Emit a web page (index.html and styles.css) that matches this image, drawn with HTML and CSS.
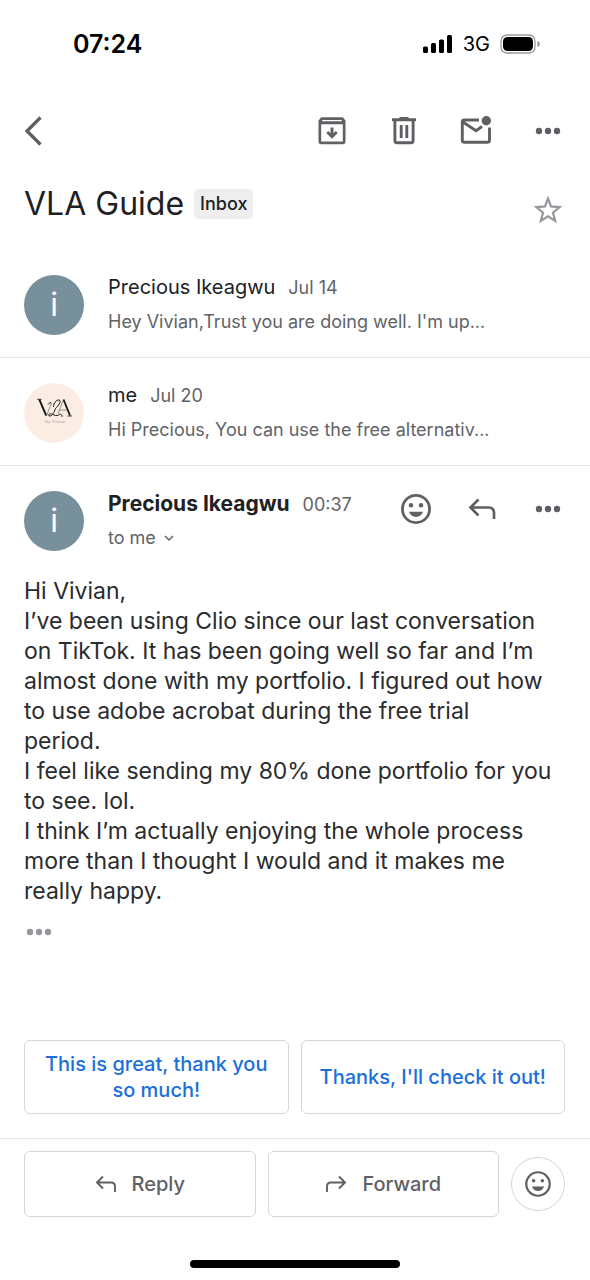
FILE: index.html
```html
<!DOCTYPE html>
<html lang="en">
<head>
<meta charset="utf-8">
<meta name="viewport" content="width=device-width, initial-scale=1">
<title>VLA Guide</title>
<link rel="stylesheet" href="styles.css">
</head>
<body>
<div class="screen">
  <div class="status">
    <time class="clock">07:24</time>
    <div class="indicators">
      <svg width="30" height="18" viewBox="0 0 30 18" aria-hidden="true"><rect x="0" y="11.500" width="5" height="6.500" rx="1.500"/><rect x="8" y="8" width="5" height="10" rx="1.500"/><rect x="16" y="4.500" width="5" height="13.500" rx="1.500"/><rect x="24" y="0" width="5" height="18" rx="1.500"/></svg>
      <span class="network">3G</span>
      <svg width="40" height="20" viewBox="0 0 40 20" aria-hidden="true"><rect x="1" y="1" width="34" height="18" rx="6" fill="none" stroke="#9a9a9a" stroke-width="1.300"/><rect x="3" y="3" width="30" height="14" rx="4.500"/><path d="M37.500 7v6c3-1 3-5 0-6Z" fill="#8e8e8e"/></svg>
    </div>
  </div>

  <nav class="toolbar">
    <button class="icon-button back" aria-label="Back"><svg width="20" height="30" viewBox="0 0 20 30"><path d="M16.500 1.500 3 15l13.500 13.500" fill="none" stroke="currentColor" stroke-width="3.300"/></svg></button>
    <button class="icon-button" aria-label="Archive"><svg width="30" height="30" viewBox="0 0 30 30"><path d="M5 1.300h20q1 0 1.700.9l1.800 2.600V25.500q0 2.700-2.700 2.700H4.200q-2.700 0-2.700-2.700V4.800l1.800-2.600Q4 1.300 5 1.300Z" fill="currentColor"/><path d="M5.700 4h18.600l.9 1.300H4.800ZM4.200 8.200h21.600v17.300H4.200Z" fill="#fff"/><path d="M15 11.500v9M10.300 16l4.700 4.700 4.700-4.700" fill="none" stroke="currentColor" stroke-width="2.900"/></svg></button>
    <button class="icon-button" aria-label="Delete"><svg width="30" height="30" viewBox="0 0 30 30" fill="none" stroke="currentColor" stroke-width="2.900"><path d="M3 3.700h24M10.500 2.500h9"/><path d="M5.900 4v20.800q0 2 2 2h14.200q2 0 2-2V4M12.200 9v13M17.800 9v13"/></svg></button>
    <button class="icon-button" aria-label="Mark as unread"><svg width="32" height="30" viewBox="0 0 32 30" fill="none" stroke="currentColor" stroke-width="2.900"><path d="M19 4H4.300q-2 0-2 2v18.200q0 2 2 2h23.200q2 0 2-2V11.500M2.500 5.800 16 14.800l6-4.300"/><circle cx="26.300" cy="4.800" r="4.700" fill="currentColor" stroke="none"/></svg></button>
    <button class="icon-button" aria-label="More options"><svg width="26" height="8" viewBox="0 0 26 8" fill="currentColor"><circle cx="4" cy="4" r="3.200"/><circle cx="13" cy="4" r="3.200"/><circle cx="22" cy="4" r="3.200"/></svg></button>
  </nav>

  <header class="subject">
    <h1>VLA Guide</h1>
    <span class="label">Inbox</span>
    <button class="icon-button star" aria-label="Star"><svg width="30" height="30" viewBox="0 0 30 30"><path d="m15 3.500 3 7.900 8.600.7-6.600 5.500 2.100 8.300-7.100-4.500-7.100 4.500 2.100-8.300-6.600-5.500 8.600-.7Z" fill="none" stroke="currentColor" stroke-width="2.200"/></svg></button>
  </header>

  <article class="message">
    <div class="avatar">i</div>
    <div class="details">
      <div class="line"><span class="sender">Precious Ikeagwu</span><time>Jul 14</time></div>
      <p class="snippet">Hey Vivian,Trust you are doing well. I'm up...</p>
    </div>
  </article>

  <article class="message">
    <svg class="photo" viewBox="0 0 60 60" aria-hidden="true"><circle cx="30" cy="30" r="30" fill="#fbece4"/><g fill="none" stroke="#1c1c1c"><path d="m15.300 16.500 6.900 16M39.500 16.500l6.500 16" stroke-width="1.900"/><path d="m22.500 33 4.500-12M39 17.500 34 31M35 27h8" stroke-width=".6" stroke="#555"/><path d="M13 16.300h4.500M43.500 33H48" stroke-width=".8"/><path d="M24 21.500c1.500-2 3-2.500 3.500-1M29.500 24c0-4 3-7.500 5.500-7s.5 5-3.500 8.500c-1.500 4-3 7.500-5.500 7.500s-1.500-3 1.500-2 5 2.500 7 1 4-.5 3.500 2" stroke-width="1"/></g><text class="photo-caption" x="31" y="40" text-anchor="middle">By Vivian</text></svg>
    <div class="details">
      <div class="line"><span class="sender">me</span><time>Jul 20</time></div>
      <p class="snippet">Hi Precious, You can use the free alternativ...</p>
    </div>
  </article>

  <article class="opened">
    <div class="message current">
      <div class="avatar">i</div>
      <div class="details">
        <div class="line"><strong class="sender">Precious Ikeagwu</strong><time>00:37</time></div>
        <button class="recipients">to me <svg width="10" height="7" viewBox="0 0 10 7"><path d="m1 1 4 4 4-4" fill="none" stroke="currentColor" stroke-width="1.500"/></svg></button>
      </div>
      <div class="actions">
        <button class="icon-button" aria-label="Add reaction"><svg width="32" height="32" viewBox="0 0 32 32" fill="currentColor"><circle cx="16" cy="16" r="13.600" fill="none" stroke="currentColor" stroke-width="2.800"/><circle cx="11" cy="12.300" r="2.200"/><circle cx="21" cy="12.300" r="2.200"/><path d="M9 18.800h14c-1 3-3.500 5.200-7 5.200s-6-2.200-7-5.200Z"/></svg></button>
        <button class="icon-button" aria-label="Reply"><svg width="28" height="22" viewBox="0 0 28 22" fill="none" stroke="currentColor" stroke-width="2.700"><path d="M10.500 1.500 2.500 9.500l8 8M3 9.500h17.500q5.500 0 5.500 5.500v6"/></svg></button>
        <button class="icon-button" aria-label="More message options"><svg width="26" height="8" viewBox="0 0 26 8" fill="currentColor"><circle cx="4" cy="4" r="3.200"/><circle cx="13" cy="4" r="3.200"/><circle cx="22" cy="4" r="3.200"/></svg></button>
      </div>
    </div>
    <div class="body">
      <p>Hi Vivian,</p>
      <p>I’ve been using Clio since our last conversation on TikTok. It has been going well so far and I’m almost done with my portfolio. I figured out how to use adobe acrobat during the free trial<br>period.</p>
      <p>I feel like sending my 80% done portfolio for you to see. lol.</p>
      <p>I think I’m actually enjoying the whole process more than I thought I would and it makes me really happy.</p>
      <button class="quoted" aria-label="Show quoted text"><svg width="26" height="8" viewBox="0 0 26 8" fill="currentColor"><circle cx="4" cy="4" r="3.200"/><circle cx="13" cy="4" r="3.200"/><circle cx="22" cy="4" r="3.200"/></svg></button>
    </div>
  </article>

  <div class="suggestions">
    <button class="suggestion">This is great, thank you so much!</button>
    <button class="suggestion">Thanks, I'll check it out!</button>
  </div>

  <footer class="footer">
    <button class="action"><svg width="22" height="18" viewBox="0 0 22 18" fill="none" stroke="currentColor" stroke-width="1.900"><path d="M8 1.500 2 7.500l6 6M2.500 7.500H16q4 0 4 4V17"/></svg>Reply</button>
    <button class="action"><svg width="22" height="18" viewBox="0 0 22 18" fill="none" stroke="currentColor" stroke-width="1.900"><path d="m14 1.500 6 6-6 6M19.500 7.500H6q-4 0-4 4V17"/></svg>Forward</button>
    <button class="react" aria-label="Add reaction"><svg width="28" height="28" viewBox="0 0 32 32" fill="currentColor"><circle cx="16" cy="16" r="13.400" fill="none" stroke="currentColor" stroke-width="2.500"/><circle cx="11" cy="12.300" r="2"/><circle cx="21" cy="12.300" r="2"/><path d="M9 18.800h14c-1 3-3.500 5.200-7 5.200s-6-2.200-7-5.200Z"/></svg></button>
  </footer>
  <div class="home-indicator"></div>
</div>
</body>
</html>
```

FILE: styles.css
```css
* {
  box-sizing: border-box;
}

body {
  margin: 0;
  background: #fff;
  color: #202124;
  font-family: Inter, "Liberation Sans", sans-serif;
}

h1,
p {
  margin: 0;
}

button {
  margin: 0;
  padding: 0;
  border: 0;
  background: none;
  color: #5f6064;
  font: inherit;
  cursor: pointer;
}

svg {
  display: block;
  flex: none;
}

.screen {
  display: flex;
  flex-direction: column;
  min-height: 100vh;
}

.status {
  display: flex;
  align-items: center;
  justify-content: space-between;
  height: 88px;
  padding: 0 50px 0 73px;
  color: #000;
}

.clock {
  font-size: 25px;
  font-weight: 600;
}

.indicators {
  display: flex;
  align-items: center;
  gap: 10px;
}

.network {
  font-size: 20px;
}

.toolbar {
  display: flex;
  align-items: center;
  gap: 24px;
  height: 86px;
  padding: 0 18px 0 24px;
}

.icon-button {
  display: flex;
  align-items: center;
  justify-content: center;
  width: 48px;
  height: 48px;
}

.back {
  justify-content: flex-start;
  margin-right: auto;
}

.subject {
  display: flex;
  align-items: center;
  gap: 10px;
  height: 76px;
  padding: 0 18px 16px 24px;
}

h1 {
  font-size: 32px;
  font-weight: 400;
  line-height: 40px;
}

.label {
  padding: 0 6px;
  border-radius: 5px;
  background: #eee;
  font-size: 18px;
  font-weight: 500;
  line-height: 30px;
}

.star {
  align-self: flex-end;
  margin-left: auto;
  color: #94979b;
}

.message {
  display: flex;
  gap: 24px;
  padding: 25px 24px 22px;
  border-bottom: 1px solid #e6e6e8;
}

.avatar,
.photo {
  flex: none;
  width: 60px;
  height: 60px;
  border-radius: 50%;
}

.photo-caption {
  fill: #b5a39b;
  font-family: "Liberation Serif", serif;
  font-size: 5px;
}

.avatar {
  background: #78909c;
  color: #fff;
  font-size: 32px;
  line-height: 60px;
  text-align: center;
}

.details {
  min-width: 0;
}

.line {
  display: flex;
  align-items: baseline;
  gap: 13px;
  height: 26px;
  line-height: 25px;
  font-size: 20px;
}

.line strong {
  font-size: 21px;
}

.line time {
  color: #5f6368;
  font-size: 18px;
}

.snippet,
.recipients {
  margin-top: 9px;
  color: #5f6368;
  font-size: 18px;
  line-height: 24px;
}

.recipients {
  display: flex;
  align-items: center;
  gap: 8px;
}

.opened {
  flex: 1;
}

.current {
  padding-right: 18px;
  border-bottom: 0;
}

.actions {
  display: flex;
  gap: 18px;
  height: 36px;
  margin-left: auto;
  align-items: center;
}

.body {
  padding: 3px 24px 24px;
  color: #2b2c2e;
  font-size: 23px;
  line-height: 30px;
}

.quoted {
  display: flex;
  align-items: center;
  justify-content: center;
  width: 30px;
  height: 24px;
  margin-top: 14px;
  color: #94979b;
}

.suggestions {
  display: grid;
  grid-template-columns: 1fr 1fr;
  gap: 12px;
  padding: 0 25px 24px 24px;
}

.suggestion,
.action {
  border: 1px solid #d5d6d9;
  border-radius: 6px;
  font-size: 20px;
  font-weight: 500;
}

.suggestion {
  min-height: 74px;
  padding: 8px 12px;
  color: #1a6fdb;
  line-height: 26px;
}

.footer {
  display: grid;
  grid-template-columns: 1fr 1fr 54px;
  align-items: center;
  gap: 12px;
  padding: 12px 25px 43px 24px;
  border-top: 1px solid #e6e6e8;
}

.action {
  display: flex;
  align-items: center;
  justify-content: center;
  gap: 15px;
  height: 66px;
}

.react {
  display: grid;
  place-items: center;
  height: 54px;
  border: 1px solid #d5d6d9;
  border-radius: 50%;
}

.home-indicator {
  width: 210px;
  height: 8px;
  margin: 0 auto 12px;
  border-radius: 4px;
  background: #000;
}
```
